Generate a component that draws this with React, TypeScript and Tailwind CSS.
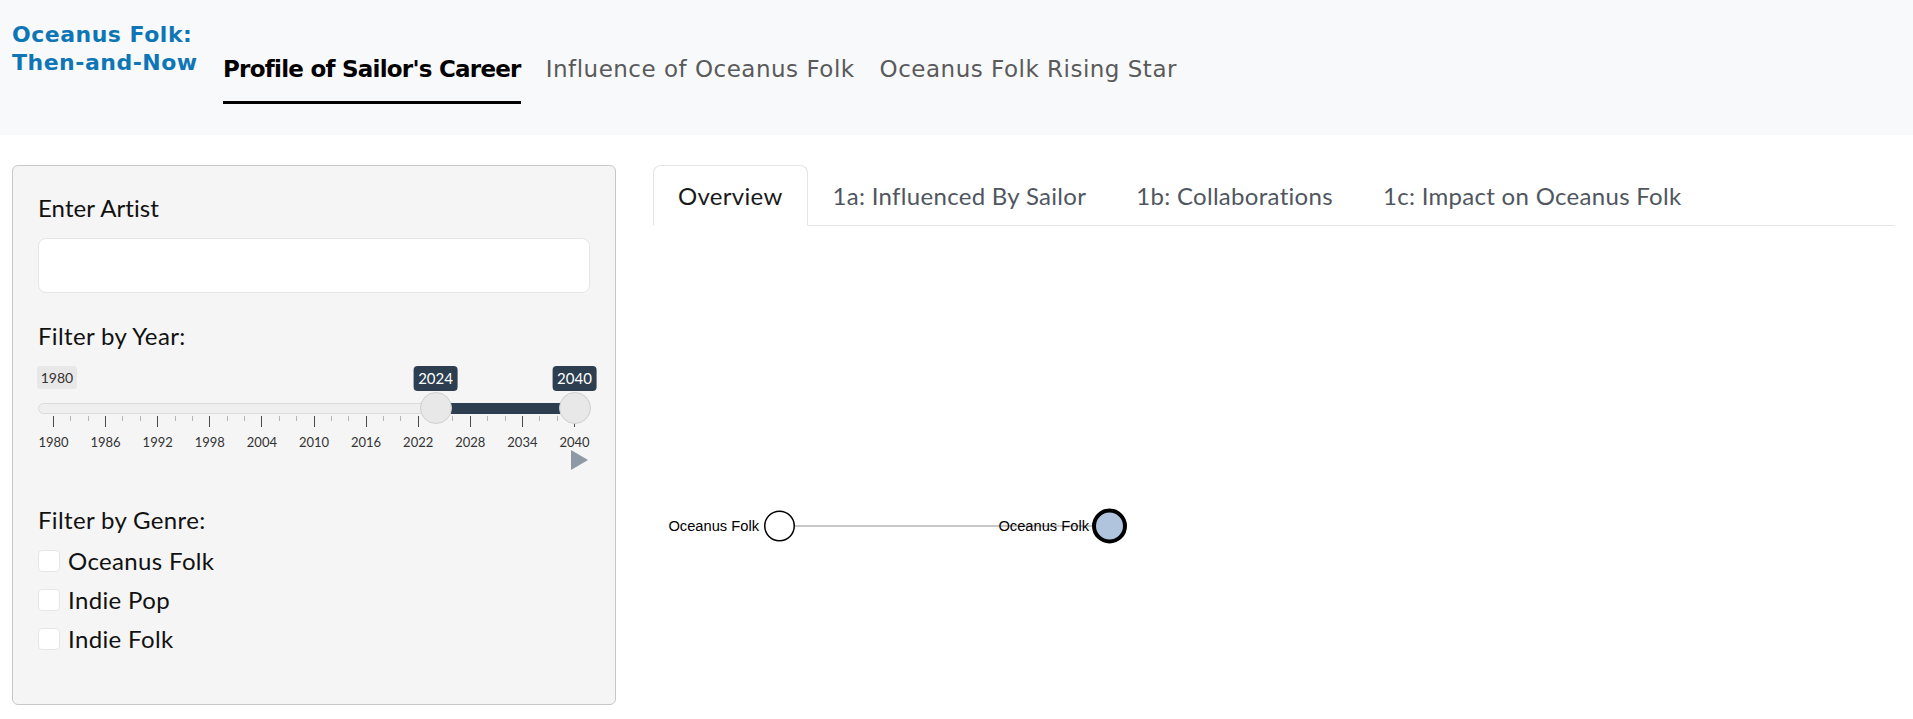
const YEARS = [1980, 1986, 1992, 1998, 2004, 2010, 2016, 2022, 2028, 2034, 2040]

// pixel offset of a year on the slider track
const pos = (y: number) => 15 + ((y - 1980) * 521) / 60

function YearSlider() {
  const minor: number[] = []
  for (let y = 1980; y < 2040; y += 6) {
    minor.push(y + 2, y + 4)
  }
  return (
    <div className="relative h-[106px] w-[552px] font-['Lato',sans-serif] tracking-normal">
      {/* min label */}
      <span className="absolute left-[-1px] top-0 flex h-[23px] w-[40px] items-center justify-center rounded-[3px] bg-[#e8e8e8] text-[14px] text-[#333]">
        1980
      </span>

      {/* track */}
      <div className="absolute left-0 top-[37px] h-[11px] w-[551px] rounded-full border border-[#dcdcdc] bg-[#efefef]" />
      <div
        className="absolute top-[37px] h-[11px] bg-[#2c3e50]"
        style={{ left: pos(2024), width: pos(2040) - pos(2024) }}
      />

      {/* ticks */}
      {YEARS.map((y) => (
        <div key={y}>
          <div className="absolute top-[50px] h-[11px] w-px bg-[#4a4a4a]" style={{ left: pos(y) }} />
          <span
            className="absolute top-[68px] w-[40px] -translate-x-1/2 text-center text-[13px] leading-[16px] text-[#333]"
            style={{ left: pos(y) + 0.5 }}
          >
            {y}
          </span>
        </div>
      ))}
      {minor.map((y) => (
        <div key={y} className="absolute top-[50px] h-[5px] w-px bg-[#b5b5b5]" style={{ left: pos(y) }} />
      ))}

      {/* handles + tooltips */}
      {[2024, 2040].map((y) => (
        <div key={y}>
          <span
            className="absolute top-0 flex h-[25px] -translate-x-1/2 items-center rounded-[4px] bg-[#2c3e50] px-[5px] text-[15px] text-white"
            style={{ left: pos(y) + 0.5 }}
          >
            {y}
          </span>
          <div
            className="absolute top-[26px] h-[32px] w-[32px] -translate-x-1/2 rounded-full border border-[#cfcfcf] bg-[#e8e8e8]"
            style={{ left: pos(y) + 0.5 }}
          />
        </div>
      ))}

      {/* play button */}
      <svg className="absolute left-[533px] top-[84px]" width="17" height="20" viewBox="0 0 17 20">
        <polygon points="0,0 17,10 0,20" fill="#8d99a5" />
      </svg>
    </div>
  )
}

function Sidebar() {
  return (
    <div className="h-[540px] w-[604px] shrink-0 rounded-md border border-[#c8c8c8] bg-[#f5f5f5] px-[25px] pt-[27px] font-['Lato',sans-serif] tracking-[0.35px] text-[#111]">
      <label className="block text-[24px] leading-[30px] tracking-[0.1px]">Enter Artist</label>
      <input className="mt-[15px] block h-[55px] w-full rounded-lg border border-[#e6e6e6] bg-white px-3 text-[20px] outline-none" />

      <div className="mt-[28px] text-[24px] leading-[30px]">Filter by Year:</div>
      <div className="mt-[15px]">
        <YearSlider />
      </div>

      <div className="mt-[33px] text-[24px] leading-[30px]">Filter by Genre:</div>
      <div className="mt-[6px] flex flex-col">
        {["Oceanus Folk", "Indie Pop", "Indie Folk"].map((g) => (
          <label key={g} className="flex h-[39px] items-center gap-2">
            <span className="h-[22px] w-[22px] rounded-[4px] border border-[#e6e6e6] bg-white" />
            <span className="text-[24px] leading-[30px]">{g}</span>
          </label>
        ))}
      </div>
    </div>
  )
}

function Graph() {
  const y = 300
  const a = 126.5
  const b = 456.5
  return (
    <svg width="1242" height="470" className="block">
      <line x1={a} y1={y} x2={b} y2={y} stroke="#c8c8c8" strokeWidth="2" />
      <circle cx={a} cy={y} r="14.75" fill="#fff" stroke="#000" strokeWidth="1.5" />
      <circle cx={b} cy={y} r="15.5" fill="#b0c4de" stroke="#000" strokeWidth="4" />
      <text x={a - 20.5} y={y + 5} textAnchor="end" fontSize="14.7" fontFamily="'Liberation Sans', Arial, sans-serif" fill="#000">
        Oceanus Folk
      </text>
      <text x={b - 20.5} y={y + 5} textAnchor="end" fontSize="14.7" fontFamily="'Liberation Sans', Arial, sans-serif" fill="#000">
        Oceanus Folk
      </text>
    </svg>
  )
}

export default function App() {
  const tabs = ["Overview", "1a: Influenced By Sailor", "1b: Collaborations", "1c: Impact on Oceanus Folk"]
  return (
    <div className="min-h-[719px] w-[1913px] bg-white">
      {/* Header */}
      <header className="flex h-[135px] bg-[#f8f9fa] pl-3 font-['DejaVu_Sans',sans-serif]">
        <div className="w-[211px] shrink-0 pt-[21px] text-[22px] font-bold leading-[28px] tracking-[0.5px] text-[#0e76b6]">
          Oceanus Folk:
          <br />
          Then-and-Now
        </div>
        <nav className="flex items-start gap-[25px]">
          <a className="mt-[55px] block border-b-[3px] border-black pb-[18px] text-[23px] font-bold leading-[28px] tracking-[-0.75px] text-black">
            Profile of Sailor's Career
          </a>
          <a className="mt-[55px] block border-b-[3px] border-transparent pb-[18px] text-[23px] leading-[28px] tracking-[0.5px] text-[#5a5a5a]">
            Influence of Oceanus Folk
          </a>
          <a className="mt-[55px] block border-b-[3px] border-transparent pb-[18px] text-[23px] leading-[28px] tracking-[0.5px] text-[#5a5a5a]">
            Oceanus Folk Rising Star
          </a>
        </nav>
      </header>

      {/* Body */}
      <div className="flex gap-[37px] px-3 pt-[30px]">
        <Sidebar />
        <main className="w-[1242px]">
          <ul className="flex border-b border-[#e5e5e5] font-['Lato',sans-serif] tracking-[0.3px]">
            {tabs.map((t, i) => (
              <li key={t} className="-mb-px">
                <a
                  className={
                    i === 0
                      ? "block rounded-t-lg border border-[#e5e5e5] border-b-white bg-white px-6 pb-[14px] pt-[15px] text-[24px] leading-[30px] text-[#1a1a1a]"
                      : "block rounded-t-lg border border-transparent px-6 pb-[14px] pt-[15px] text-[24px] leading-[30px] text-[#4f5660]"
                  }
                >
                  {t}
                </a>
              </li>
            ))}
          </ul>
          <Graph />
        </main>
      </div>
    </div>
  )
}
